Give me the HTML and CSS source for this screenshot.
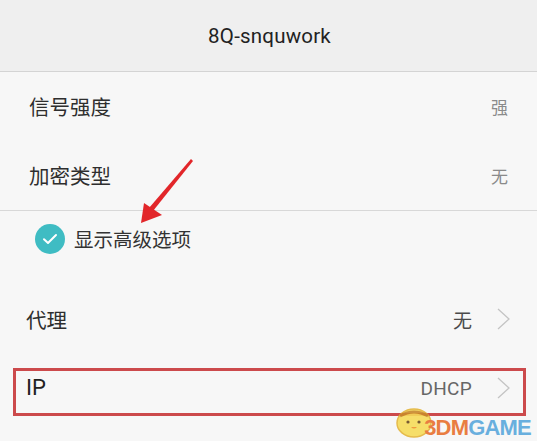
FILE: index.html
```html
<!DOCTYPE html>
<html lang="zh-CN">
<head>
    <meta charset="UTF-8">
    <meta name="viewport" content="width=device-width, initial-scale=1.0">
    <title>8Q-snquwork</title>
    <link rel="stylesheet" href="styles.css">
</head>
<body>
    <div class="screen">
        <header class="title-bar">
            <h1>8Q-snquwork</h1>
        </header>

        <section class="info">
            <div class="row">
                <span class="label">信号强度</span>
                <span class="value">强</span>
            </div>
            <div class="row">
                <span class="label">加密类型</span>
                <span class="value">无</span>
            </div>
        </section>

        <label class="advanced">
            <span class="check">
                <svg width="30" height="30" viewBox="0 0 30 30">
                    <circle cx="15" cy="15" r="15" fill="#3fbcc3"/>
                    <path d="M9 15.2l4 3.8 8-8" fill="none" stroke="#fff" stroke-width="2" stroke-linecap="round" stroke-linejoin="round"/>
                </svg>
            </span>
            <span class="advanced-text">显示高级选项</span>
        </label>

        <section class="options">
            <div class="row link">
                <span class="label">代理</span>
                <span class="value dark">无</span>
                <svg class="chevron" width="13" height="22" viewBox="0 0 13 22">
                    <path d="M1 1l11 10L1 21" fill="none" stroke="#c4c4c4" stroke-width="1.3"/>
                </svg>
            </div>
            <div class="row link ip">
                <span class="label latin">IP</span>
                <span class="value latin">DHCP</span>
                <svg class="chevron" width="13" height="22" viewBox="0 0 13 22">
                    <path d="M1 1l11 10L1 21" fill="none" stroke="#c4c4c4" stroke-width="1.3"/>
                </svg>
                <span class="mark-box"></span>
            </div>
        </section>

        <!-- pointer arrow towards the advanced options toggle -->
        <svg class="pointer" width="537" height="441" viewBox="0 0 537 441">
            <path d="M191 159 L193 161 L153 211 L149 208 Z" fill="#e2262a"/>
            <path d="M141 223 L144 203 L162 215 Z" fill="#e2262a"/>
        </svg>

        <div class="watermark">
            <svg class="chick" width="40" height="34" viewBox="0 0 40 34">
                <ellipse cx="20" cy="19" rx="17" ry="14" fill="#f6dc5a" stroke="#e4b53a" stroke-width="1.5"/>
                <path d="M6 12 Q20 4 34 12" fill="none" stroke="#c98a2a" stroke-width="3"/>
                <circle cx="14" cy="18" r="1.6" fill="#6a4a20"/>
                <circle cx="25" cy="18" r="1.6" fill="#6a4a20"/>
                <path d="M17 23 Q20 26 23 23" fill="#f0902a"/>
            </svg>
            <span class="wm-text"><b class="wm-3dm">3DM</b><b class="wm-game">GAME</b></span>
        </div>
    </div>
</body>
</html>
```

FILE: styles.css
```css
html, body {
    margin: 0;
    padding: 0;
}
body {
    background-color: #f7f7f7;
    font-family: "Noto Sans CJK SC", "Noto Sans", sans-serif;
    color: #2a2a2a;
}
.screen {
    position: relative;
    width: 537px;
    height: 441px;
    overflow: hidden;
}
.title-bar {
    height: 71px;
    background-color: #efefef;
    border-bottom: 1px solid #d4d4d4;
    display: flex;
    align-items: center;
    justify-content: center;
}
.title-bar h1 {
    margin: 0 0 0 2px;
    font-family: Roboto, "Noto Sans", sans-serif;
    font-weight: normal;
    font-size: 20.5px;
    color: #222;
    letter-spacing: 0.2px;
}
.info {
    border-bottom: 1px solid #d8d8d8;
}
.row {
    display: flex;
    align-items: center;
    height: 69px;
    padding: 0 29px;
    line-height: 1;
}
.label {
    font-size: 20.5px;
    color: #2e2e2e;
}
.value {
    margin-left: auto;
    font-size: 17px;
    color: #8a8a8a;
}
.advanced {
    display: flex;
    align-items: center;
    gap: 9px;
    height: 56px;
    padding-left: 35px;
}
.check {
    display: flex;
    width: 30px;
    height: 30px;
}
.advanced-text {
    font-size: 19.5px;
    color: #333;
    line-height: 1;
}
.options {
    margin-top: 17px;
}
.link {
    height: 70px;
    padding: 0 27px 0 26px;
}
.link .value {
    font-size: 19px;
    margin-right: 25px;
}
.value.dark {
    color: #4a4a4a;
}
.latin {
    font-family: Roboto, "Noto Sans", sans-serif;
}
.label.latin {
    font-size: 22px;
    color: #222;
}
.value.latin {
    font-size: 19px;
    color: #666;
    letter-spacing: 0.3px;
}
.ip {
    position: relative;
    height: 72px;
}
.ip .label,
.ip .value,
.ip .chevron {
    margin-top: -4px;
}
.mark-box {
    position: absolute;
    left: 13px;
    top: 14px;
    width: 507px;
    height: 42px;
    border: 3px solid #cc4a4c;
}
.pointer {
    position: absolute;
    left: 0;
    top: 0;
    pointer-events: none;
}
.watermark {
    position: absolute;
    right: 6px;
    bottom: 2px;
    display: flex;
    align-items: flex-end;
    opacity: 0.9;
}
.chick {
    margin-right: -10px;
    margin-bottom: 1px;
}
.wm-text {
    font-family: "Liberation Sans", Arial, sans-serif;
    font-size: 22px;
    letter-spacing: -0.8px;
    line-height: 1;
    font-weight: bold;
}
.wm-3dm {
    color: #e8702e;
}
.wm-game {
    color: #5aa8dc;
}
```
